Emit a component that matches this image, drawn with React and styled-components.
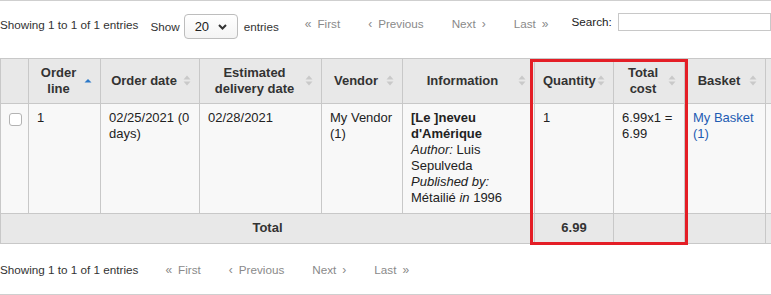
import React from 'react';
import styled, { createGlobalStyle } from 'styled-components';

const GlobalStyle = createGlobalStyle`
  body {
    margin: 0;
    background: #fff;
    font-family: "Liberation Sans", Arial, sans-serif;
    color: #222;
    overflow: hidden;
  }
`;

const Page = styled.div`
  width: 771px;
  height: 295px;
  overflow: hidden;
`;

const Toolbar = styled.div`
  display: flex;
  align-items: flex-start;
  box-sizing: border-box;
  height: ${p => (p.$bottom ? '51px' : '58px')};
  padding-top: ${p => (p.$bottom ? '18px' : '0')};
  border-top: ${p => (p.$bottom ? 'none' : '1px solid #cfcfcf')};
  border-bottom: ${p => (p.$bottom ? '1px solid #cfcfcf' : 'none')};
  font-size: 11.7px;
  line-height: 16px;
  color: #333;
  white-space: nowrap;
`;

const Info = styled.div`
  margin-top: ${p => p.$top || 0}px;
`;

const Length = styled.div`
  display: flex;
  align-items: center;
  gap: 4px;
  margin: 13px 0 0 12px;
  line-height: 25px;
`;

const FakeSelect = styled.div`
  display: flex;
  align-items: center;
  justify-content: space-between;
  box-sizing: border-box;
  width: 54px;
  height: 25px;
  padding: 0 10px 0 10px;
  margin-right: 2px;
  border: 1px solid #bdbdbd;
  border-radius: 4px;
  background: linear-gradient(#fff, #f4f4f4);
  font-size: 13px;
  color: #222;
`;

const Paginate = styled.div`
  display: flex;
  margin: ${p => p.$top || 0}px 0 0 ${p => p.$left || 0}px;
`;

const PageButton = styled.span`
  display: flex;
  align-items: center;
  padding: 0 14px;
  color: #8a8a8a;
`;

const Angle = styled.span`
  font-size: 12px;
  color: #8a8a8a;
  margin: ${p => (p.$after ? '0 0 0 6px' : '0 6px 0 0')};
`;

const Search = styled.label`
  display: flex;
  align-items: center;
  gap: 6px;
  margin: 12px 0 0 9px;
  color: #222;
`;

const SearchInput = styled.input`
  box-sizing: border-box;
  width: 153px;
  height: 18px;
  border: 1px solid #c8c8c8;
  padding: 0 4px;
  font: inherit;
`;

const TableWrap = styled.div`
  position: relative;
`;

const Table = styled.table`
  border-collapse: collapse;
  table-layout: fixed;
  width: 866px;
  font-size: 13px;
  line-height: 16px;
`;

const Col = styled.col`
  width: ${p => p.$w}px;
`;

const HeadCell = styled.th`
  position: relative;
  height: 32px;
  padding: 6px 20px 6px 8px;
  background: #e8e8e8;
  border: 1px solid #c8c8c8;
  color: #333;
  font-weight: bold;
  text-align: center;
  vertical-align: middle;
  white-space: ${p => (p.$nowrap ? 'nowrap' : 'normal')};
`;

const BodyCell = styled.td`
  padding: 6px 8px 7px;
  background: #f8f8f8;
  border: 1px solid #c8c8c8;
  vertical-align: top;
  color: #222;
`;

const FootCell = styled.td`
  padding: 6px 8px 7px;
  background: #e8e8e8;
  border: 1px solid #c8c8c8;
  color: #333;
  font-weight: bold;
  text-align: center;
`;

const SortIcon = styled.svg`
  position: absolute;
  right: 8px;
  top: 50%;
  margin-top: -6px;
`;

const Checkbox = styled.span`
  display: block;
  box-sizing: border-box;
  width: 13px;
  height: 13px;
  margin-top: 3px;
  border: 1px solid #b3b3b3;
  border-radius: 3px;
  background: #fff;
`;

const Title = styled.b`
  color: #222;
`;

const BasketLink = styled.a`
  color: #1e5cb3;
  text-decoration: none;
`;

const Highlight = styled.div`
  position: absolute;
  left: 530px;
  top: 1px;
  width: 158px;
  height: 186px;
  box-sizing: border-box;
  border: 3.5px solid #e41e26;
  pointer-events: none;
`;

const Sort = ({ active }) => (
  <SortIcon width="8" height="12" viewBox="0 0 8 12">
    {active ? (
      <polygon points="4,4 7.5,7.5 0.5,7.5" fill="#2b78c8" />
    ) : (
      <>
        <polygon points="4,0.5 7.5,4.5 0.5,4.5" fill="#c9c9c9" />
        <polygon points="0.5,6.5 7.5,6.5 4,10.5" fill="#c9c9c9" />
      </>
    )}
  </SortIcon>
);

const Chevron = () => (
  <svg width="9" height="6" viewBox="0 0 9 6">
    <path d="M1 1 L4.5 4.5 L8 1" stroke="#333" strokeWidth="2" fill="none" />
  </svg>
);

const Pagination = ({ top, left }) => (
  <Paginate $top={top} $left={left}>
    <PageButton><Angle>«</Angle>First</PageButton>
    <PageButton><Angle>‹</Angle>Previous</PageButton>
    <PageButton>Next<Angle $after>›</Angle></PageButton>
    <PageButton>Last<Angle $after>»</Angle></PageButton>
  </Paginate>
);

const columns = [
  { label: '', w: 28, sort: false },
  { label: 'Order line', w: 72, sort: 'active' },
  { label: 'Order date', w: 99, sort: true },
  { label: 'Estimated delivery date', w: 122, sort: true },
  { label: 'Vendor', w: 81, sort: true },
  { label: 'Information', w: 132, sort: true },
  { label: 'Quantity', w: 79, sort: true, nowrap: true },
  { label: 'Total cost', w: 71, sort: true },
  { label: 'Basket', w: 81, sort: true },
  { label: '', w: 101, sort: false },
];

export default function App() {
  return (
    <Page>
      <GlobalStyle />
      <Toolbar>
        <Info $top={16}>Showing 1 to 1 of 1 entries</Info>
        <Length>
          Show
          <FakeSelect>20 <Chevron /></FakeSelect>
          entries
        </Length>
        <Pagination top={15} left={12} />
        <Search>
          Search:
          <SearchInput type="text" />
        </Search>
      </Toolbar>

      <TableWrap>
        <Table>
          <colgroup>
            {columns.map((c, i) => <Col key={i} $w={c.w} />)}
          </colgroup>
          <thead>
            <tr>
              {columns.map((c, i) => (
                <HeadCell key={i} $nowrap={c.nowrap}>
                  {c.label}
                  {c.sort && <Sort active={c.sort === 'active'} />}
                </HeadCell>
              ))}
            </tr>
          </thead>
          <tbody>
            <tr>
              <BodyCell><Checkbox /></BodyCell>
              <BodyCell>1</BodyCell>
              <BodyCell>02/25/2021 (0 days)</BodyCell>
              <BodyCell>02/28/2021</BodyCell>
              <BodyCell>My Vendor (1)</BodyCell>
              <BodyCell>
                <Title>[Le ]neveu d'Amérique</Title>
                <div><i>Author:</i> Luis Sepulveda</div>
                <div><i>Published by:</i> Métailié <i>in</i> 1996</div>
              </BodyCell>
              <BodyCell>1</BodyCell>
              <BodyCell>6.99x1 = 6.99</BodyCell>
              <BodyCell><BasketLink href="#">My Basket (1)</BasketLink></BodyCell>
              <BodyCell />
            </tr>
          </tbody>
          <tfoot>
            <tr>
              <FootCell colSpan={6}>Total</FootCell>
              <FootCell>6.99</FootCell>
              <FootCell />
              <FootCell />
              <FootCell />
            </tr>
          </tfoot>
        </Table>
        <Highlight />
      </TableWrap>

      <Toolbar $bottom>
        <Info>Showing 1 to 1 of 1 entries</Info>
        <Pagination top={0} left={13} />
      </Toolbar>
    </Page>
  );
}
